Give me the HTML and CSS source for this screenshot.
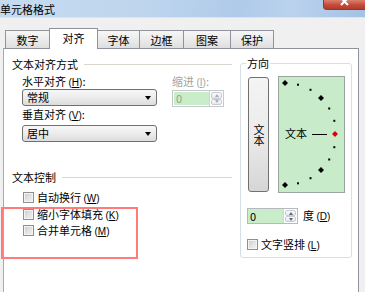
FILE: index.html
```html
<!DOCTYPE html>
<html lang="zh">
<head>
<meta charset="utf-8">
<link rel="stylesheet" href="styles.css">
</head>
<body>
<div class="win">
  <div class="titlebar">
    <span class="title">单元格格式</span>
    <span class="close"><svg width="10" height="7" viewBox="0 0 10 7"><path d="M1 -2 L8 5 M8 -2 L1 5" stroke="#fff" stroke-width="2"/></svg></span>
  </div>
  <div class="tabs">
    <div class="tab t1">数字</div>
    <div class="tab active t2">对齐</div>
    <div class="tab t3">字体</div>
    <div class="tab t4">边框</div>
    <div class="tab t5">图案</div>
    <div class="tab t6">保护</div>
  </div>
  <div class="panel">
    <div class="left">
      <div class="sect"><span>文本对齐方式</span><i class="rule r1"></i></div>
      <div class="align-row">
        <div class="col1">
          <div class="lbl l1">水平对齐 <span class="key">(<u>H</u>)</span>:</div>
          <div class="select s1"><span>常规</span><b class="arr"></b></div>
          <div class="lbl l2">垂直对齐 <span class="key">(<u>V</u>)</span>:</div>
          <div class="select s2"><span>居中</span><b class="arr"></b></div>
        </div>
        <div class="col2">
          <div class="lbl l1 dis">缩进 <span class="key">(<u>I</u>)</span>:</div>
          <div class="spin dspin"><span class="field">0</span><span class="btns"><i class="up"></i><i class="dn"></i></span></div>
        </div>
      </div>
      <div class="sect ctl"><span>文本控制</span><i class="rule r2"></i></div>
      <div class="cb c1"><i class="box"></i><span>自动换行 <span class="key">(<u>W</u>)</span></span></div>
      <div class="cb"><i class="box"></i><span>缩小字体填充 <span class="key">(<u>K</u>)</span></span></div>
      <div class="cb c3"><i class="box"></i><span>合并单元格 <span class="key">(<u>M</u>)</span></span></div>
    </div>
    <div class="group">
      <div class="grp-title">方向</div>
      <div class="orient">
        <div class="vbtn"><span class="vtext">文本</span></div>
        <svg class="dial" width="67" height="117" viewBox="0 0 67 117">
          <rect x="0.5" y="0.5" width="66" height="116" fill="#c8ecca" stroke="#9aa5a0"/>
          <g fill="#000">
            <polygon points="7,4 10,7 7,10 4,7"/>
            <polygon points="43,18.9 46,21.9 43,24.9 40,21.9"/>
            <polygon points="43,91.1 46,94.1 43,97.1 40,94.1"/>
            <polygon points="7,106 10,109 7,112 4,109"/>
            <rect x="19" y="7.7" width="2" height="2"/>
            <rect x="31.5" y="12.8" width="2" height="2"/>
            <rect x="50.2" y="31.5" width="2" height="2"/>
            <rect x="55.3" y="43.8" width="2" height="2"/>
            <rect x="55.3" y="70.2" width="2" height="2"/>
            <rect x="50.2" y="82.5" width="2" height="2"/>
            <rect x="31.5" y="101.2" width="2" height="2"/>
            <rect x="19" y="106.3" width="2" height="2"/>
          </g>
          <polygon points="57,55 60,58 57,61 54,58" fill="#e00000"/>
          <text x="7" y="62" font-size="11" font-family="Noto Sans CJK SC, sans-serif">文本</text>
          <line x1="34" y1="58.5" x2="49" y2="58.5" stroke="#000" stroke-width="1"/>
        </svg>
      </div>
      <div class="deg-row">
        <div class="spin gspin"><span class="field">0</span><span class="btns"><i class="up"></i><i class="dn"></i></span></div>
        <span class="deg">度 <span class="key">(<u>D</u>)</span></span>
      </div>
      <div class="cb vert"><i class="box"></i><span>文字竖排 <span class="key">(<u>L</u>)</span></span></div>
    </div>
  </div>
  <div class="redbox"></div>
</div>
</body>
</html>
```

FILE: styles.css
```css
* { box-sizing: border-box; margin: 0; padding: 0; }
html, body { width: 365px; height: 292px; overflow: hidden; }
body {
  background: #f0f0f0;
  font-family: "Noto Sans CJK SC", "Noto Sans", sans-serif;
  font-size: 11px;
  line-height: 13px;
  color: #000;
}
.win { position: relative; width: 365px; height: 292px; overflow: hidden; background: #f0f0f0; }

.titlebar {
  position: relative;
  height: 18px;
  background: linear-gradient(100deg, #c6dbf0 0%, #bed5ed 40%, #afcaea 65%, #bad2ed 80%, #a3c1e5 100%);
  border-bottom: 1px solid #dae5f1;
}
.title { display: block; padding-top: 3px; line-height: 12px; font-size: 11px; }
.close {
  position: absolute; right: 0; top: 0;
  width: 42px; height: 10px;
  background: linear-gradient(#d9826f, #c64a38 55%, #b63a2b);
  border-left: 1px solid #8e3b2f; border-bottom: 1px solid #8e3b2f;
  border-radius: 0 0 0 4px;
  display: flex; justify-content: center; align-items: flex-start;
}
.close svg { display: block; }

.tabs {
  display: flex; align-items: flex-end;
  height: 20px; margin-top: 10px; padding-left: 5px;
  position: relative; z-index: 1;
}
.tab {
  height: 18px;
  border: 1px solid #8f939b; border-bottom: none;
  background: linear-gradient(#f6f6f6, #ebebeb 50%, #dedede);
  display: flex; align-items: center; justify-content: center;
  font-size: 11px; padding-top: 1px;
}
.tab + .tab { margin-left: -1px; }
.t1 { width: 45px; }
.t2 { width: 49px; }
.t3 { width: 43px; }
.t4 { width: 45px; }
.t5 { width: 48px; }
.t6 { width: 44px; }
.tab.active {
  height: 21px; margin-bottom: -1px;
  background: #fff; padding-top: 0; padding-bottom: 2px;
  position: relative; z-index: 2;
}

.panel {
  margin-left: 3px; width: 356px; height: 260px;
  background: #fff;
  border: 1px solid #8f939b; border-left-color: #a3acb6;
  display: flex; align-items: flex-start;
  padding: 9px 0 0 8px;
}
.left { width: 220px; }
.sect { display: flex; align-items: center; height: 13px; }
.rule { flex: 1; height: 1px; background: #dad8ce; }
.r1 { margin-left: 6px; }
.r2 { margin-left: 6px; }

.align-row { display: flex; margin-top: 4px; }
.col1 { padding-left: 10px; width: 145px; }
.col2 { margin-left: 15px; }
.lbl { height: 13px; }
.l2 { margin-top: 2px; }
.dis { color: #a3a3a3; }
.key { font-family: "Liberation Sans", sans-serif; font-size: 10px; }

.select {
  width: 135px; height: 17px; margin-top: 1px;
  border: 1px solid #707070; border-radius: 3px;
  background: linear-gradient(#f7f7f7, #ececec 50%, #dcdcdc);
  display: flex; align-items: center; justify-content: space-between;
  padding: 0 5px 0 4px;
}
.s2 { margin-top: 4px; }
.arr {
  width: 0; height: 0;
  border-left: 3.5px solid transparent; border-right: 3.5px solid transparent;
  border-top: 4px solid #000; margin-top: 1px;
}

.spin { display: flex; height: 17px; border: 1px solid #b5b9bf; background: #fff; }
.dspin { width: 52px; margin-top: 2px; border-color: #c4c8cc; }
.field { flex: 1; background: #c9ecc9; padding-left: 2px; line-height: 15px; font-size: 11px; }
.dspin .field { color: #8aa48a; margin: 1px 0 1px 1px; line-height: 13px; }
.btns {
  width: 14px; display: flex; flex-direction: column;
  border-left: 1px solid #d0d3d7; padding: 1px;
}
.btns i {
  flex: 1; display: flex; align-items: center; justify-content: center;
  border: 1px solid #c8ccd2; border-radius: 2px;
  background: linear-gradient(#fafafa, #e6e8ea);
  position: relative;
}
.btns i::after {
  content: ""; width: 0; height: 0;
  border-left: 2.5px solid transparent; border-right: 2.5px solid transparent;
}
.btns .up::after { border-bottom: 3px solid #5b6b80; }
.btns .dn::after { border-top: 3px solid #5b6b80; }
.dspin .btns .up::after { border-bottom-color: #a8aeb6; }
.dspin .btns .dn::after { border-top-color: #a8aeb6; }

.ctl { margin-top: 29px; }
.cb { display: flex; align-items: center; height: 17px; padding-left: 11px; }
.c1 { margin-top: 5px; }
.c3 { margin-top: -1px; }
.box {
  width: 11px; height: 11px; margin-right: 3px; flex: none;
  border: 1px solid #8e8f8f;
  background: linear-gradient(135deg, #cbcbcb, #e6e6e6 60%, #f2f2f2);
  box-shadow: inset 0 0 0 1px #f4f4f4;
}

.group {
  width: 112px; height: 195px; margin-left: 8px; margin-top: 5px;
  border: 1px solid #d5dfe5; border-radius: 3px;
  padding-left: 7px;
}
.grp-title {
  width: fit-content; margin-top: -7px; margin-left: -2px;
  padding: 0 1px; background: #fff; height: 13px;
}
.orient { display: flex; align-items: center; margin-top: 6px; height: 117px; }
.vbtn {
  width: 21px; height: 115px;
  border: 1px solid #707070; border-radius: 3px;
  background: linear-gradient(#f4f4f4, #ebebeb 50%, #d6d6d6);
  display: flex; align-items: center; justify-content: center;
  padding-top: 1px;
}
.vtext { writing-mode: vertical-rl; text-orientation: upright; line-height: 13px; }
.dial { display: block; margin-left: 9px; }

.deg-row { display: flex; align-items: center; margin-top: 15px; margin-left: -1px; }
.gspin { width: 51px; height: 16px; }
.gspin .field { line-height: 14px; }
.deg { margin-left: 5px; }
.cb.vert { padding-left: 0; margin-left: -1px; margin-top: 14px; height: 13px; }

.redbox {
  position: absolute; left: 1px; top: 207px;
  width: 137px; height: 52px;
  border: 2px solid #ff7b7b;
}
```
